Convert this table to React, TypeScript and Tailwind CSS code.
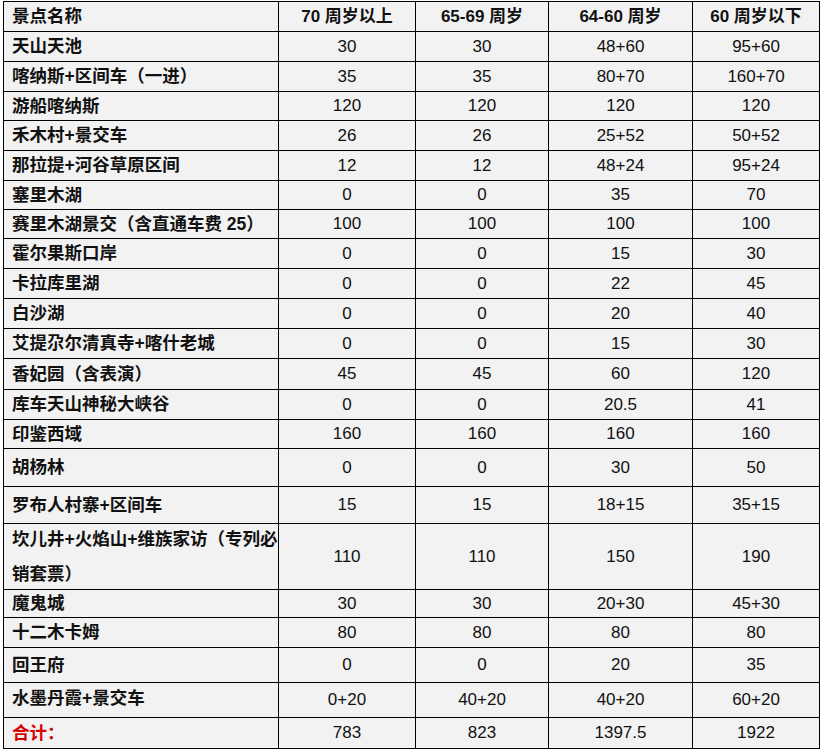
type Row = {
  name: string;
  values: [string, string, string, string];
  h: string;
  labelClass?: string;
  multiline?: boolean;
};

const ROWS: Row[] = [
  { name: "天山天池", values: ["30", "30", "48+60", "95+60"], h: "h-[30px]" },
  { name: "喀纳斯+区间车（一进）", values: ["35", "35", "80+70", "160+70"], h: "h-[30px]" },
  { name: "游船喀纳斯", values: ["120", "120", "120", "120"], h: "h-[29px]" },
  { name: "禾木村+景交车", values: ["26", "26", "25+52", "50+52"], h: "h-[30px]" },
  { name: "那拉提+河谷草原区间", values: ["12", "12", "48+24", "95+24"], h: "h-[30px]" },
  { name: "塞里木湖", values: ["0", "0", "35", "70"], h: "h-[29px]" },
  { name: "赛里木湖景交（含直通车费 25）", values: ["100", "100", "100", "100"], h: "h-[29px]" },
  { name: "霍尔果斯口岸", values: ["0", "0", "15", "30"], h: "h-[30px]" },
  { name: "卡拉库里湖", values: ["0", "0", "22", "45"], h: "h-[30px]" },
  { name: "白沙湖", values: ["0", "0", "20", "40"], h: "h-[30px]" },
  { name: "艾提尕尔清真寺+喀什老城", values: ["0", "0", "15", "30"], h: "h-[30px]" },
  { name: "香妃园（含表演）", values: ["45", "45", "60", "120"], h: "h-[31px]" },
  { name: "库车天山神秘大峡谷", values: ["0", "0", "20.5", "41"], h: "h-[30px]" },
  { name: "印鉴西域", values: ["160", "160", "160", "160"], h: "h-[29px]" },
  { name: "胡杨林", values: ["0", "0", "30", "50"], h: "h-[38px]" },
  { name: "罗布人村寨+区间车", values: ["15", "15", "18+15", "35+15"], h: "h-[37px]" },
  { name: "坎儿井+火焰山+维族家访（专列必", values: ["110", "110", "150", "190"], h: "h-[66px]", multiline: true },
  { name: "魔鬼城", values: ["30", "30", "20+30", "45+30"], h: "h-[28px]" },
  { name: "十二木卡姆", values: ["80", "80", "80", "80"], h: "h-[30px]" },
  { name: "回王府", values: ["0", "0", "20", "35"], h: "h-[35px]" },
  { name: "水墨丹霞+景交车", values: ["0+20", "40+20", "40+20", "60+20"], h: "h-[35px]", labelClass: "self-start pt-[2px]" },
];

const COL_W = ["w-[137px]", "w-[133px]", "w-[144px]", "w-[127px]"];
const HEADERS = ["70 周岁以上", "65-69 周岁", "64-60 周岁", "60 周岁以下"];

const cjk = "font-['Liberation_Sans','Noto_Sans_CJK_SC',sans-serif]";

const App = () => {
  return (
    <div className={`w-[822px] h-[751px] bg-white pl-[3px] pt-[1px] ${cjk} text-[17px] text-[#111]`}>
      <div className="w-[817px] border-l border-t border-black bg-[#f2f2f2]">
        {/* header */}
        <div className="flex h-[30px] border-b border-black font-bold">
          <div className="w-[275px] border-r border-black flex items-center pl-[8px] text-[17.5px]">景点名称</div>
          {HEADERS.map((label, i) => (
            <div key={label} className={`${COL_W[i]} border-r border-black flex items-center justify-center`}>
              {label}
            </div>
          ))}
        </div>

        {ROWS.map((row) => (
          <div key={row.name} className={`flex ${row.h} border-b border-black`}>
            <div className="w-[275px] border-r border-black flex items-center pl-[8px] font-semibold text-[17.5px]">
              {row.multiline ? (
                <span className="leading-[35px]">
                  {row.name}
                  <br />
                  销套票）
                </span>
              ) : (
                <span className={row.labelClass}>{row.name}</span>
              )}
            </div>
            {row.values.map((v, i) => (
              <div key={i} className={`${COL_W[i]} border-r border-black flex items-center justify-center`}>
                {v}
              </div>
            ))}
          </div>
        ))}

        {/* total */}
        <div className="flex h-[31px] border-b border-black">
          <div className="w-[275px] border-r border-black flex items-center pl-[8px] font-bold text-[17.5px] text-[#d40000]">合计：</div>
          {["783", "823", "1397.5", "1922"].map((v, i) => (
            <div key={v} className={`${COL_W[i]} border-r border-black flex items-center justify-center`}>
              {v}
            </div>
          ))}
        </div>
      </div>
    </div>
  );
};

export default App;
